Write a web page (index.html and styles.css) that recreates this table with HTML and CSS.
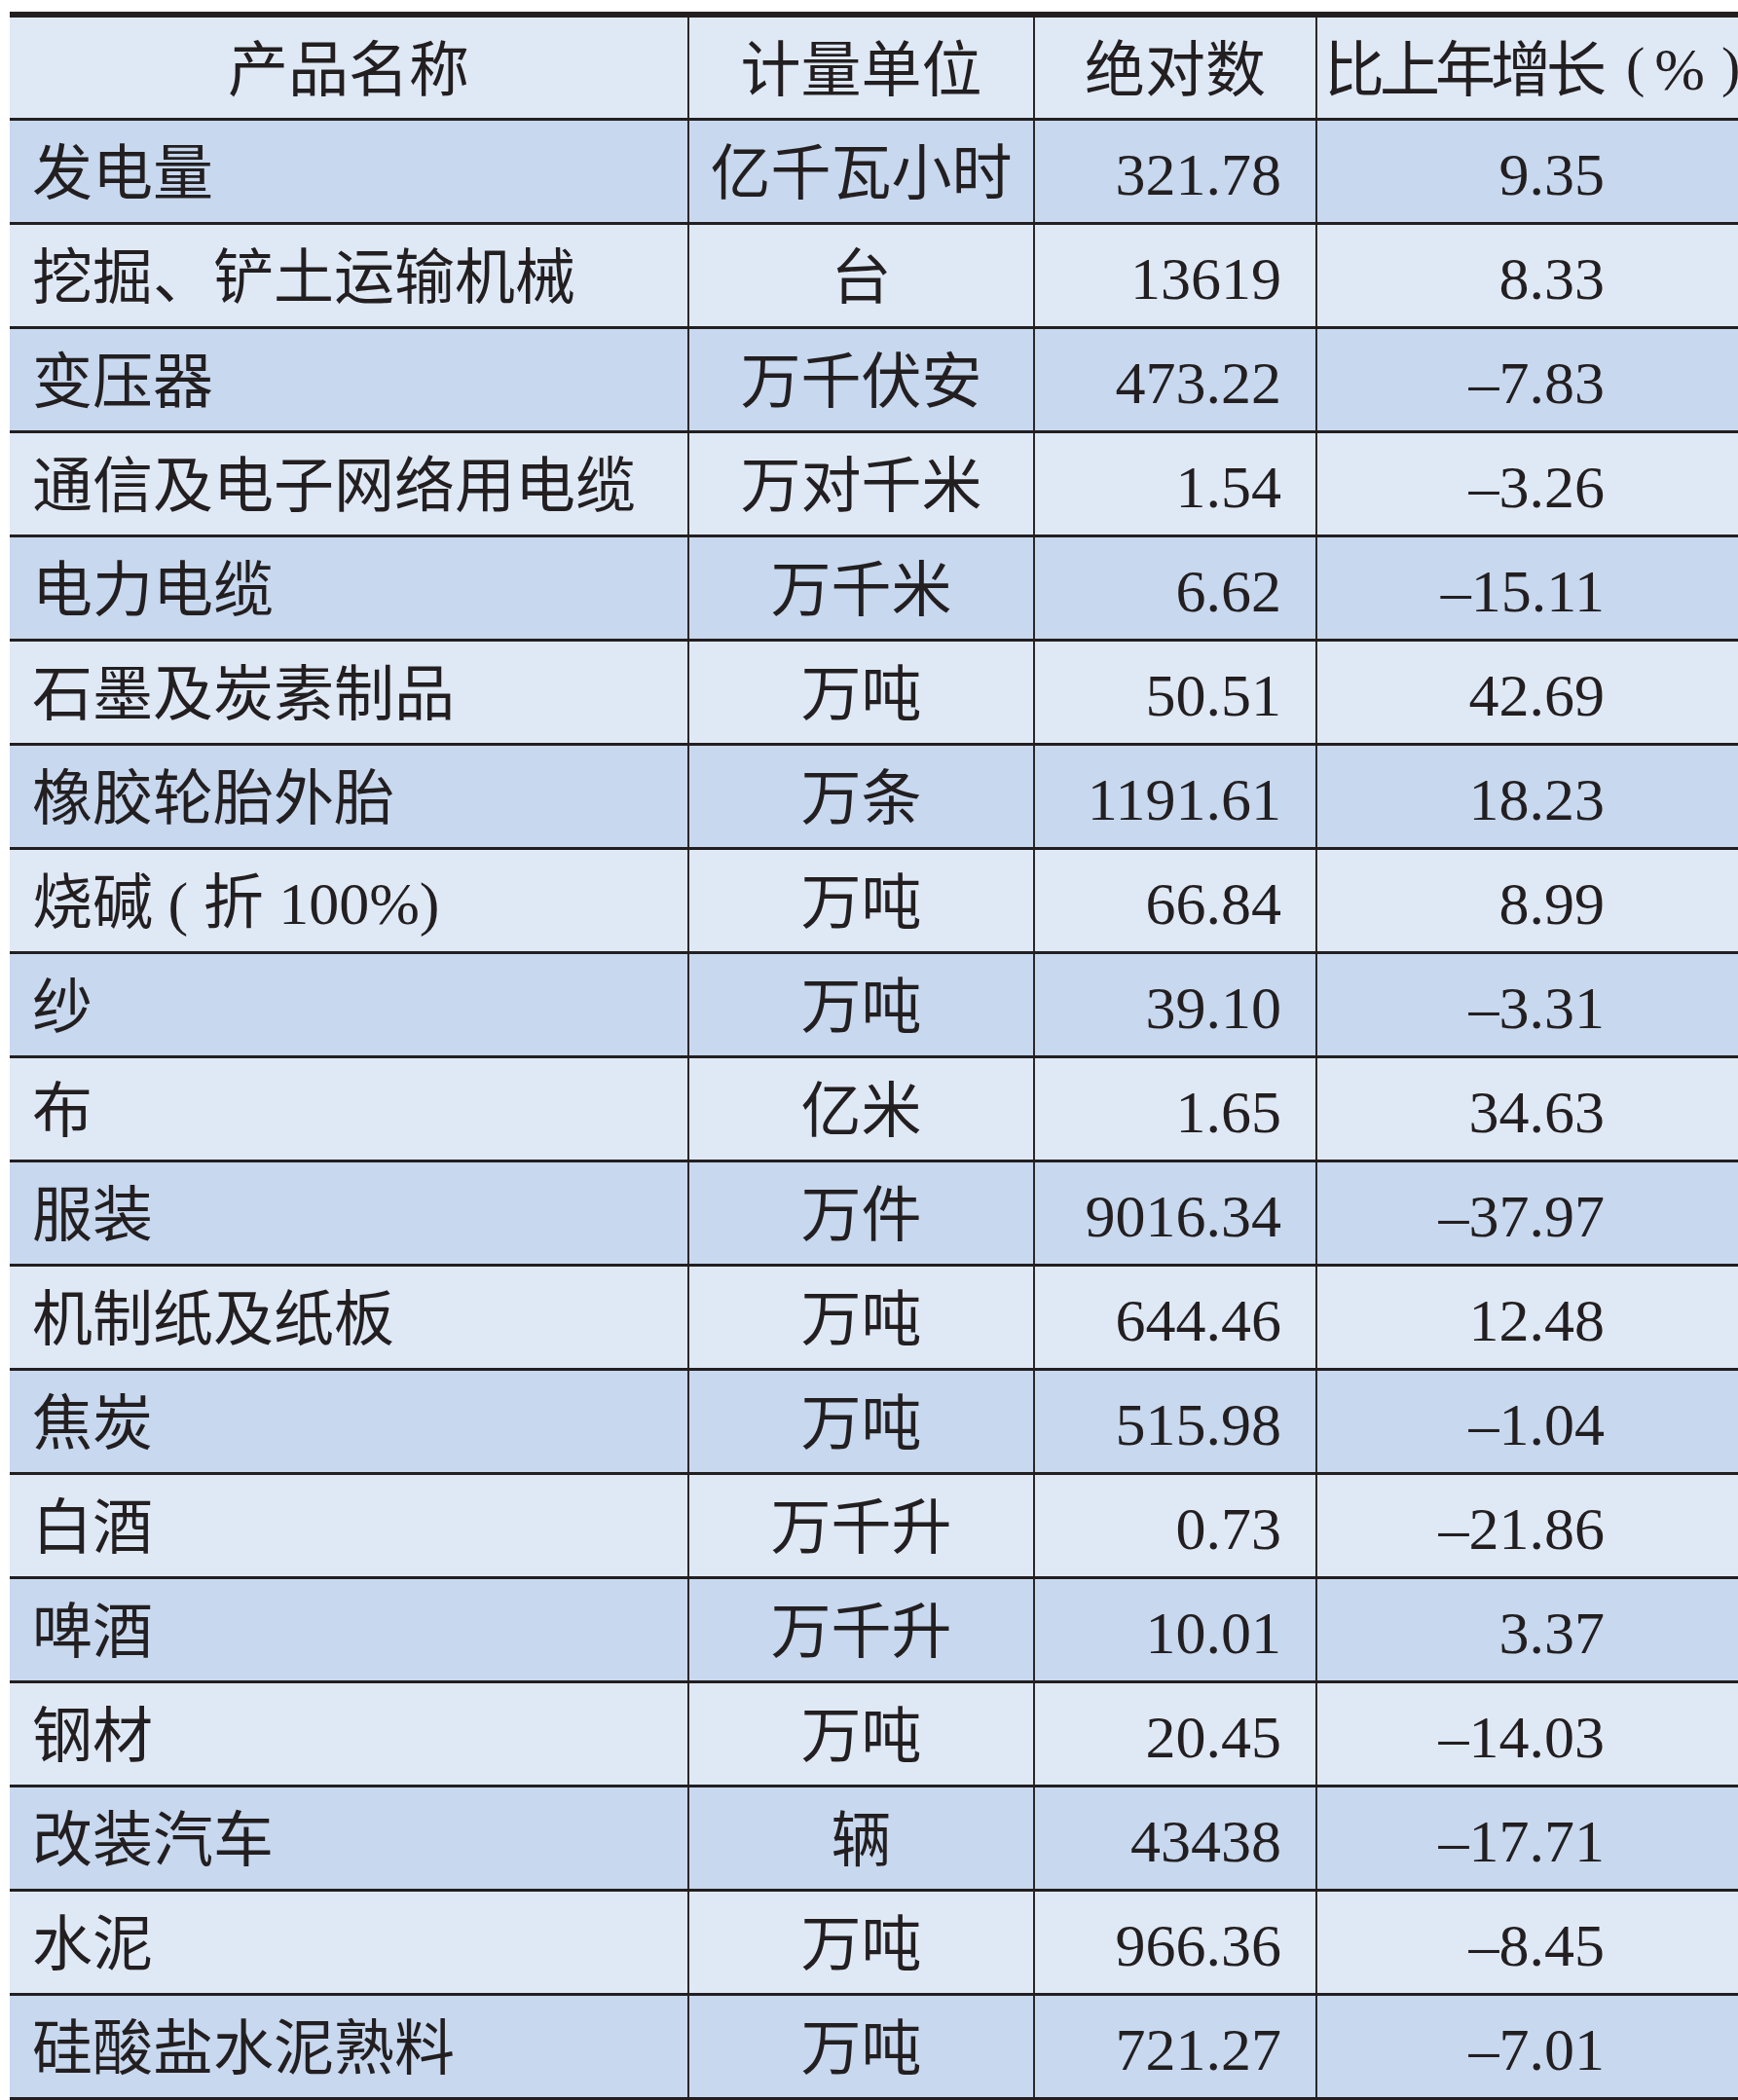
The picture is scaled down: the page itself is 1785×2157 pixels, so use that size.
FILE: index.html
```html
<!DOCTYPE html>
<html lang="zh-CN">
<head>
<meta charset="utf-8">
<title>主要工业产品产量</title>
<link rel="stylesheet" href="styles.css">
</head>
<body>
<div class="sheet">
  <div class="row head">
    <div class="cell c1">产品名称</div>
    <div class="cell c2">计量单位</div>
    <div class="cell c3">绝对数</div>
    <div class="cell c4"><span class="cond">比上年增长</span><span class="lp">(</span><span class="pct">%</span><span class="rp">)</span></div>
  </div>
  <div class="row dark"><div class="cell c1">发电量</div><div class="cell c2">亿千瓦小时</div><div class="cell c3">321.78</div><div class="cell c4">9.35</div></div>
  <div class="row light"><div class="cell c1">挖掘、铲土运输机械</div><div class="cell c2">台</div><div class="cell c3">13619</div><div class="cell c4">8.33</div></div>
  <div class="row dark"><div class="cell c1">变压器</div><div class="cell c2">万千伏安</div><div class="cell c3">473.22</div><div class="cell c4">–7.83</div></div>
  <div class="row light"><div class="cell c1">通信及电子网络用电缆</div><div class="cell c2">万对千米</div><div class="cell c3">1.54</div><div class="cell c4">–3.26</div></div>
  <div class="row dark"><div class="cell c1">电力电缆</div><div class="cell c2">万千米</div><div class="cell c3">6.62</div><div class="cell c4">–15.11</div></div>
  <div class="row light"><div class="cell c1">石墨及炭素制品</div><div class="cell c2">万吨</div><div class="cell c3">50.51</div><div class="cell c4">42.69</div></div>
  <div class="row dark"><div class="cell c1">橡胶轮胎外胎</div><div class="cell c2">万条</div><div class="cell c3">1191.61</div><div class="cell c4">18.23</div></div>
  <div class="row light"><div class="cell c1">烧碱 ( 折 100%)</div><div class="cell c2">万吨</div><div class="cell c3">66.84</div><div class="cell c4">8.99</div></div>
  <div class="row dark"><div class="cell c1">纱</div><div class="cell c2">万吨</div><div class="cell c3">39.10</div><div class="cell c4">–3.31</div></div>
  <div class="row light"><div class="cell c1">布</div><div class="cell c2">亿米</div><div class="cell c3">1.65</div><div class="cell c4">34.63</div></div>
  <div class="row dark"><div class="cell c1">服装</div><div class="cell c2">万件</div><div class="cell c3">9016.34</div><div class="cell c4">–37.97</div></div>
  <div class="row light"><div class="cell c1">机制纸及纸板</div><div class="cell c2">万吨</div><div class="cell c3">644.46</div><div class="cell c4">12.48</div></div>
  <div class="row dark"><div class="cell c1">焦炭</div><div class="cell c2">万吨</div><div class="cell c3">515.98</div><div class="cell c4">–1.04</div></div>
  <div class="row light"><div class="cell c1">白酒</div><div class="cell c2">万千升</div><div class="cell c3">0.73</div><div class="cell c4">–21.86</div></div>
  <div class="row dark"><div class="cell c1">啤酒</div><div class="cell c2">万千升</div><div class="cell c3">10.01</div><div class="cell c4">3.37</div></div>
  <div class="row light"><div class="cell c1">钢材</div><div class="cell c2">万吨</div><div class="cell c3">20.45</div><div class="cell c4">–14.03</div></div>
  <div class="row dark"><div class="cell c1">改装汽车</div><div class="cell c2">辆</div><div class="cell c3">43438</div><div class="cell c4">–17.71</div></div>
  <div class="row light"><div class="cell c1">水泥</div><div class="cell c2">万吨</div><div class="cell c3">966.36</div><div class="cell c4">–8.45</div></div>
  <div class="row dark last"><div class="cell c1">硅酸盐水泥熟料</div><div class="cell c2">万吨</div><div class="cell c3">721.27</div><div class="cell c4">–7.01</div></div>
</div>
</body>
</html>
```

FILE: styles.css
```css
html, body {
  margin: 0;
  padding: 0;
  background: #ffffff;
  overflow: hidden;
}

body {
  font-family: "Liberation Serif", "Noto Sans CJK SC", serif;
  font-size: 62px;
  color: #231f20;
}

.sheet {
  margin: 12px 0 0 10px;
  width: 1775px;
}

.row {
  display: grid;
  grid-template-columns: 696px 355px 290px 434px;
  height: 107px;
  box-sizing: border-box;
  border-top: 3px solid #231f20;
}

.row.head {
  height: 109px;
  border-top: 6px solid #231f20;
  background: #dfe9f6;
}

.row.light {
  background: #dfe9f6;
}

.row.dark {
  background: #c7d8ef;
}

.row.last {
  height: 110px;
  border-bottom: 3px solid #231f20;
}

.cell {
  display: flex;
  align-items: center;
  box-sizing: border-box;
  white-space: nowrap;
  line-height: 1;
  padding-top: 6px;
}

.cell + .cell {
  border-left: 2px solid #2b2728;
}

.c1 {
  justify-content: flex-start;
  padding-left: 23px;
}

.c2 {
  justify-content: center;
}

.c3 {
  justify-content: flex-end;
  padding-right: 35px;
}

.c4 {
  justify-content: flex-end;
  padding-right: 137px;
}

.head .cell {
  justify-content: center;
  padding-left: 0;
  padding-right: 0;
}

.head .c4 {
  justify-content: flex-start;
  padding-left: 7px;
}

.cond {
  letter-spacing: -5px;
}

.lp,
.rp {
  font-size: 58px;
  position: relative;
  top: -4px;
}

.lp {
  margin-left: 25px;
}

.pct {
  margin-left: 10px;
  position: relative;
  top: -2px;
}

.rp {
  margin-left: 17px;
}
```
